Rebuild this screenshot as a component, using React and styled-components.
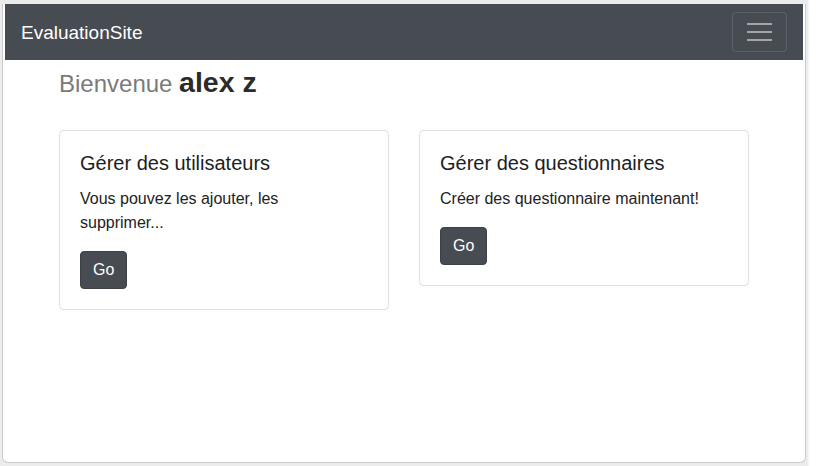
import React from 'react';
import styled, { createGlobalStyle } from 'styled-components';

const GlobalStyle = createGlobalStyle`
	* {
		box-sizing: border-box;
	}
	body {
		margin: 0;
		font-family: 'Liberation Sans', Arial, sans-serif;
		color: #212529;
	}
`;

const cards = [
	{
		title: 'Gérer des utilisateurs',
		text: 'Vous pouvez les ajouter, les supprimer...',
	},
	{
		title: 'Gérer des questionnaires',
		text: 'Créer des questionnaire maintenant!',
	},
];

const App = () => {
	return (
		<>
			<GlobalStyle />
			<S.Screen>
				<S.Window>
					<S.Navbar>
						<S.Brand>EvaluationSite</S.Brand>
						<S.Toggler aria-label="menu">
							<S.TogglerBar />
							<S.TogglerBar />
							<S.TogglerBar />
						</S.Toggler>
					</S.Navbar>
					<S.Container>
						<S.Welcome>
							Bienvenue <S.UserName>alex z</S.UserName>
						</S.Welcome>
						<S.Row>
							{cards.map(card => (
								<S.Col key={card.title}>
									<S.Card>
										<S.CardTitle>{card.title}</S.CardTitle>
										<S.CardText>{card.text}</S.CardText>
										<S.GoButton>Go</S.GoButton>
									</S.Card>
								</S.Col>
							))}
						</S.Row>
					</S.Container>
				</S.Window>
				<S.Side />
			</S.Screen>
		</>
	);
};

export default App;

const Screen = styled.div`
	display: flex;
	align-items: flex-start;
	width: 818px;
	height: 466px;
	padding: 4px 0 0 2px;
	background-color: #ececec;
	overflow: hidden;
`;

const Window = styled.div`
	width: 804px;
	height: 459px;
	background-color: #fff;
	border: 1px solid #cbcbcb;
	border-top: none;
	border-radius: 0 0 6px 6px;
	overflow: hidden;
`;

const Side = styled.div`
	flex: 1;
	align-self: stretch;
	margin: -4px 0 0 2px;
	background-color: #fff;
	border-left: 1px solid #f4f4f4;
`;

const Navbar = styled.nav`
	display: flex;
	align-items: center;
	justify-content: space-between;
	height: 56px;
	margin-left: 2px;
	margin-right: 2px;
	padding: 0 16px 0 16px;
	background-color: #474b52;
`;

const Brand = styled.a`
	color: #fff;
	font-size: 19px;
	line-height: 1;
	padding-top: 1px;
`;

const Toggler = styled.button`
	display: flex;
	flex-direction: column;
	justify-content: center;
	align-items: center;
	gap: 6px;
	width: 55px;
	height: 40px;
	padding: 0;
	background: transparent;
	border: 1px solid rgba(255, 255, 255, 0.12);
	border-radius: 4px;
`;

const TogglerBar = styled.span`
	display: block;
	width: 25px;
	height: 2px;
	background-color: rgba(255, 255, 255, 0.5);
`;

const Container = styled.div`
	width: 720px;
	margin: 0 auto;
	padding: 0 15px;
`;

const Welcome = styled.div`
	margin-top: 5px;
	font-size: 24px;
	line-height: 1.2;
	color: #7a7a7a;
`;

const UserName = styled.span`
	font-size: 28.5px;
	font-weight: 700;
	color: #2b2b2b;
`;

const Row = styled.div`
	display: flex;
	align-items: flex-start;
	margin: 31px -15px 0;
`;

const Col = styled.div`
	width: 50%;
	padding: 0 15px;
`;

const Card = styled.div`
	padding: 20px;
	border: 1px solid #e0e0e0;
	border-radius: 4px;
	background-color: #fff;
`;

const CardTitle = styled.h5`
	margin: 0 0 12px;
	font-size: 20px;
	font-weight: 500;
	line-height: 1.2;
	color: #1e1e1e;
`;

const CardText = styled.p`
	max-width: 272px;
	margin: 0 0 16px;
	font-size: 16px;
	line-height: 1.5;
	color: #222;
`;

const GoButton = styled.button`
	display: block;
	height: 38px;
	padding: 0 12px;
	font-family: inherit;
	font-size: 16px;
	color: #fff;
	background-color: #474b52;
	border: 1px solid #3d4147;
	border-radius: 4px;
	cursor: pointer;
`;

const S = {
	Screen,
	Window,
	Side,
	Navbar,
	Brand,
	Toggler,
	TogglerBar,
	Container,
	Welcome,
	UserName,
	Row,
	Col,
	Card,
	CardTitle,
	CardText,
	GoButton,
};
